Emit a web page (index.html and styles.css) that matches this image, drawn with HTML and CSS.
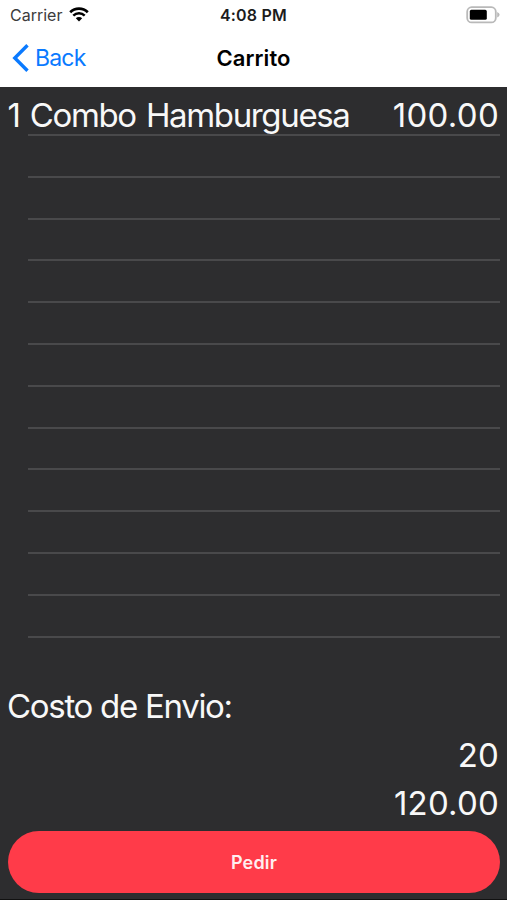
FILE: index.html
```html
<!DOCTYPE html>
<html lang="es">

<head>
  <meta charset="UTF-8">
  <meta name="viewport" content="width=device-width, initial-scale=1.0">
  <title>Carrito</title>
  <link rel="stylesheet" href="styles.css">
</head>

<body>
  <header class="top">
    <div class="status-bar">
      <div class="carrier">
        <span class="carrier-name">Carrier</span>
        <svg class="wifi" width="20" height="15" viewBox="0 0 20 15">
          <path d="M1.2 5.2 A12.6 12.6 0 0 1 18.8 5.2" fill="none" stroke="#000" stroke-width="2.7" />
          <path d="M4.3 8.6 A8.2 8.2 0 0 1 15.7 8.6" fill="none" stroke="#000" stroke-width="2.5" />
          <path d="M6.8 11.3 A4.6 4.6 0 0 1 13.2 11.3 L10 14.5 Z" fill="#000" />
        </svg>
      </div>
      <span class="time">4:08 PM</span>
      <svg class="battery" width="34" height="18" viewBox="0 0 34 18">
        <rect x="1.2" y="1.2" width="28.6" height="15.2" rx="4.5" fill="#fff" stroke="#b9b9b9" stroke-width="1.8" />
        <rect x="3.8" y="3.8" width="17" height="10" rx="1.6" fill="#000" />
        <path d="M31.2 6 Q33.6 7 33.6 8.8 Q33.6 10.6 31.2 11.6 Z" fill="#b9b9b9" />
      </svg>
    </div>
    <nav class="nav-bar">
      <a class="back">
        <svg class="chevron" width="18" height="30" viewBox="0 0 18 30">
          <path d="M15.5 2.3 L2.8 15 L15.5 27.7" fill="none" stroke="#0a7aff" stroke-width="3.4" />
        </svg>
        <span class="back-text">Back</span>
      </a>
      <h1 class="title">Carrito</h1>
    </nav>
  </header>

  <main class="cart">
    <ul class="items">
      <li class="item first">
        <span class="item-name">1 Combo Hamburguesa</span>
        <span class="item-price">100.00</span>
      </li>
      <li class="item"></li>
      <li class="item"></li>
      <li class="item"></li>
      <li class="item"></li>
      <li class="item"></li>
      <li class="item"></li>
      <li class="item"></li>
      <li class="item"></li>
      <li class="item"></li>
      <li class="item"></li>
      <li class="item"></li>
      <li class="item"></li>
    </ul>

    <div class="summary">
      <p class="shipping-label">Costo de Envio:</p>
      <p class="amount">20</p>
      <p class="amount">120.00</p>
      <button class="order-btn" type="button">Pedir</button>
    </div>
  </main>
</body>

</html>
```

FILE: styles.css
```css
body {
  margin: 0;
  height: 900px;
  display: flex;
  flex-direction: column;
  overflow: hidden;
  font-family: Inter, "Liberation Sans", sans-serif;
  background-color: #2d2d2f;
  color: #f8f8f8;
}

/* Status bar and navigation */
.top {
  height: 87px;
  background-color: #fff;
  color: #000;
}

.status-bar {
  display: grid;
  grid-template-columns: 1fr auto 1fr;
  align-items: center;
  height: 29px;
  padding: 0 7px 0 10px;
}

.carrier {
  display: flex;
  align-items: center;
  gap: 6.5px;
}

.carrier-name {
  font-size: 16px;
  color: #3c3c3c;
}

.time {
  font-size: 16px;
  font-weight: 600;
  letter-spacing: 0.2px;
  margin-right: 3px;
  color: #1c1c1c;
}

.battery {
  justify-self: end;
}

.nav-bar {
  display: grid;
  grid-template-columns: 1fr auto 1fr;
  align-items: center;
  height: 58px;
  padding: 0 12px;
}

.back {
  display: flex;
  align-items: center;
  gap: 5px;
  color: #0a7aff;
  font-size: 23px;
  letter-spacing: -0.8px;
}

.title {
  margin: 0;
  font-size: 22px;
  font-weight: 600;
  letter-spacing: 0.1px;
}

/* Product list */
.cart {
  flex: 1;
  display: flex;
  flex-direction: column;
  border-bottom: 1px solid #111;
}

.items {
  list-style: none;
  margin: 0;
  padding: 0 7px 0 28px;
}

.item {
  box-sizing: border-box;
  height: 41.8px;
  border-bottom: 2px solid #49494b;
}

.first {
  display: flex;
  justify-content: space-between;
  height: 49.1px;
  padding-top: 8px;
  line-height: 41px;
  font-size: 33px;
}

.item-name {
  margin-left: -20.5px;
  letter-spacing: -1.35px;
  word-spacing: 2.2px;
  white-space: nowrap;
}

.item-price {
  margin-right: 1px;
  letter-spacing: 0.3px;
}

/* Totals */
.summary {
  display: flex;
  flex-direction: column;
  margin-top: auto;
  padding: 0 7px 6px 8px;
  font-size: 33px;
  line-height: 48.5px;
}

.summary p {
  margin: 0;
}

.summary .shipping-label {
  margin-left: -1px;
  letter-spacing: -1.3px;
}

.summary .amount {
  margin-right: 1px;
  text-align: right;
  letter-spacing: 0.2px;
}

.order-btn {
  height: 62px;
  margin-top: 3.5px;
  border: none;
  border-radius: 31px;
  background-color: #ff3b49;
  color: #ffeef0;
  font-family: inherit;
  font-size: 18px;
  font-weight: 600;
  letter-spacing: 0.2px;
}
```
